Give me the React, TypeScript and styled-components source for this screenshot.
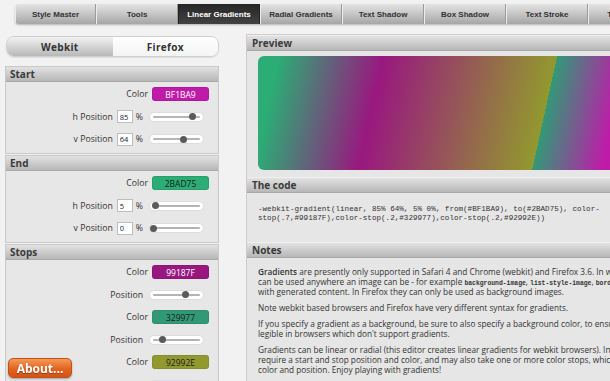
import React from "react";
import styled, { createGlobalStyle } from "styled-components";

const Global = createGlobalStyle`
  html, body { margin: 0; padding: 0; background: #f2f2f2; overflow: hidden; }
  body { font-family: "Open Sans", "Noto Sans", sans-serif; color: #333; }
  * { box-sizing: border-box; }
`;

const Page = styled.div`
  width: 610px;
  height: 381px;
  overflow: hidden;
  padding-top: 4px;
`;

const Nav = styled.nav`
  display: flex;
  margin-left: 15px;
  height: 20px;
  width: 700px;
  border-radius: 4px 0 0 4px;
  overflow: hidden;
  box-shadow: 0 1px 2px rgba(0, 0, 0, 0.25);
`;

const NavTab = styled.div<{ $active?: boolean; $first?: boolean }>`
  flex: 0 0 ${(p) => (p.$first ? "81px" : "82px")};
  display: flex;
  align-items: center;
  justify-content: center;
  font: bold 8px "Liberation Sans Narrow", "Liberation Sans", Arial, sans-serif;
  color: ${(p) => (p.$active ? "#fff" : "#333")};
  background: ${(p) =>
    p.$active ? "linear-gradient(#262626, #424242)" : "linear-gradient(#e4e4e4, #a6a6a6)"};
  border-left: 1px solid ${(p) => (p.$active ? "#222" : "#ececec")};
  border-right: 1px solid ${(p) => (p.$active ? "#222" : "#9a9a9a")};
`;

const Main = styled.div`
  display: flex;
  align-items: flex-start;
  margin-top: 10px;
`;

const LeftCol = styled.div`
  margin-left: 5px;
  width: 214px;
  padding-top: 2px;
  display: flex;
  flex-direction: column;
`;

const EngineTabs = styled.div`
  display: flex;
  margin-left: 1px;
  width: 213px;
  height: 21px;
  border-radius: 8px;
  border: 1px solid #cfcfcf;
  overflow: hidden;
  margin-bottom: 9px;
  box-shadow: 0 1px 1px rgba(0, 0, 0, 0.08);
`;

const EngineTab = styled.div<{ $selected?: boolean }>`
  flex: 1;
  display: flex;
  align-items: center;
  justify-content: center;
  font: bold 10px "Open Sans", "Noto Sans", sans-serif;
  letter-spacing: 0.3px;
  color: #333;
  background: ${(p) =>
    p.$selected ? "linear-gradient(#f2f2f2, #b8b8b8)" : "linear-gradient(#ffffff, #f4f4f4)"};
`;

const Section = styled.section`
  border: 1px solid #c9c9c9;
  background: #e7e7e7;
  margin-bottom: 1px;
`;

const Header = styled.div`
  height: 15px;
  padding-left: 4px;
  font: bold 10px/14px "Open Sans", "Noto Sans", sans-serif;
  color: #3a3a3a;
  background: linear-gradient(#e2e2e2, #b7b7b7);
  border-bottom: 1px solid #a8a8a8;
`;

const SectionBody = styled.div`
  display: flex;
  flex-direction: column;
  gap: 8.5px;
  padding: 5px 9px 7px 0;
`;

const Row = styled.div`
  display: flex;
  align-items: center;
  justify-content: flex-end;
  height: 14px;
`;

const Label = styled.span<{ $gap?: number }>`
  font-size: 8.7px;
  color: #333;
  margin-right: ${(p) => p.$gap ?? 4}px;
`;

const Swatch = styled.div<{ $bg: string; $fg: string }>`
  width: 57px;
  height: 14px;
  border-radius: 3px;
  background: ${(p) => p.$bg};
  color: ${(p) => p.$fg};
  border: 1px solid rgba(0, 0, 0, 0.08);
  font: 8.5px "Open Sans", "Noto Sans", sans-serif;
  display: flex;
  align-items: center;
  justify-content: center;
`;

const NumInput = styled.input`
  width: 16px;
  height: 13px;
  padding: 0 0 0 2px;
  margin: 0;
  border: 1px solid #bdbdbd;
  background: #fff;
  font: 7.5px "Open Sans", "Noto Sans", sans-serif;
  color: #223;
  outline: none;
`;

const Pct = styled.span`
  font-size: 8.7px;
  color: #333;
  margin: 0 6px 0 3px;
`;

const Slider = styled.div`
  position: relative;
  width: 55px;
  height: 10px;
  border-radius: 5px;
  background: #fff;
  border: 1px solid #dcdcdc;
  margin-right: 5px;
  &::before {
    content: "";
    position: absolute;
    left: 3px;
    right: 3px;
    top: 3px;
    height: 2px;
    background: #b4b4b4;
    border-radius: 1px;
  }
`;

const Knob = styled.span<{ $v: number }>`
  position: absolute;
  top: 0.5px;
  left: ${(p) => 3 + p.$v * 47 - 3.5}px;
  width: 7px;
  height: 7px;
  border-radius: 50%;
  background: #5a5a5a;
`;

const RightPanel = styled.div`
  margin-left: 27px;
  width: 439px;
  border: 1px solid #cccccc;
  background: #e6e6e6;
  flex: 0 0 auto;
`;

const RHeader = styled.div`
  height: 16px;
  padding-left: 5px;
  font: bold 10px/14px "Open Sans", "Noto Sans", sans-serif;
  color: #3a3a3a;
  background: linear-gradient(#e2e2e2, #b7b7b7);
  border-top: 1px solid #f0f0f0;
  border-bottom: 1px solid #a8a8a8;
`;

const PreviewBody = styled.div`
  padding: 5px 11px 7px;
`;

const PreviewBox = styled.div`
  width: 415px;
  height: 114px;
  border-radius: 6px;
  background: linear-gradient(
    282.4deg,
    #bf1ba9 69.6px,
    #329977 137.6px,
    #92992e 137.6px,
    #99187f 307.5px,
    #2bad75 409.5px
  );
`;

const CodeBody = styled.div`
  padding: 12px 11px 19px;
  font: 7.6px/9px "Liberation Mono", "DejaVu Sans Mono", monospace;
  color: #333;
  height: 49px;
`;

const NotesBody = styled.div`
  padding: 9px 11px 10px;
  font: 8.25px/10px "Open Sans", "Noto Sans", sans-serif;
  color: #333;
`;

const Para = styled.p`
  margin: 0 0 6px;
  strong { font-weight: 600; }
`;

const Mono = styled.code`
  font: bold 6.4px "Liberation Mono", "DejaVu Sans Mono", monospace;
`;

const AboutButton = styled.button`
  position: fixed;
  left: 8px;
  bottom: 3px;
  width: 64px;
  height: 20px;
  padding: 0;
  border-radius: 5px;
  border: 1px solid #c65016;
  background: linear-gradient(#f59a5a, #e2641f 55%, #d25318);
  color: #fff;
  font: bold 12px "Open Sans", "Noto Sans", sans-serif;
  text-shadow: 0 1px 1px rgba(0, 0, 0, 0.35);
  box-shadow: 0 1px 2px rgba(0, 0, 0, 0.3);
`;

const navItems = [
  "Style Master",
  "Tools",
  "Linear Gradients",
  "Radial Gradients",
  "Text Shadow",
  "Box Shadow",
  "Text Stroke",
  "Transforms",
];

function ColorRow({ bg, fg, text }: { bg: string; fg: string; text: string }) {
  return (
    <Row>
      <Label>Color</Label>
      <Swatch $bg={bg} $fg={fg}>{text}</Swatch>
    </Row>
  );
}

function PosRow({ label, value }: { label: string; value: number }) {
  return (
    <Row>
      <Label>{label}</Label>
      <NumInput readOnly value={String(value)} />
      <Pct>%</Pct>
      <Slider>
        <Knob $v={value / 100} />
      </Slider>
    </Row>
  );
}

function StopPos({ value }: { value: number }) {
  return (
    <Row>
      <Label $gap={6}>Position</Label>
      <Slider>
        <Knob $v={value} />
      </Slider>
    </Row>
  );
}

export default function App() {
  return (
    <Page>
      <Global />
      <Nav>
        {navItems.map((n, i) => (
          <NavTab key={n} $first={i === 0} $active={n === "Linear Gradients"}>
            {n}
          </NavTab>
        ))}
      </Nav>
      <Main>
        <LeftCol>
          <EngineTabs>
            <EngineTab $selected>Webkit</EngineTab>
            <EngineTab>Firefox</EngineTab>
          </EngineTabs>
          <Section>
            <Header>Start</Header>
            <SectionBody>
              <ColorRow bg="#BF1BA9" fg="#fff" text="BF1BA9" />
              <PosRow label="h Position" value={85} />
              <PosRow label="v Position" value={64} />
            </SectionBody>
          </Section>
          <Section>
            <Header>End</Header>
            <SectionBody>
              <ColorRow bg="#2BAD75" fg="#1a1a1a" text="2BAD75" />
              <PosRow label="h Position" value={5} />
              <PosRow label="v Position" value={0} />
            </SectionBody>
          </Section>
          <Section>
            <Header>Stops</Header>
            <SectionBody>
              <ColorRow bg="#99187F" fg="#fff" text="99187F" />
              <StopPos value={0.7} />
              <ColorRow bg="#329977" fg="#1a1a1a" text="329977" />
              <StopPos value={0.2} />
              <ColorRow bg="#92992E" fg="#1a1a1a" text="92992E" />
              <StopPos value={0.2} />
            </SectionBody>
          </Section>
        </LeftCol>
        <RightPanel>
          <RHeader>Preview</RHeader>
          <PreviewBody>
            <PreviewBox />
          </PreviewBody>
          <RHeader>The code</RHeader>
          <CodeBody>
            -webkit-gradient(linear, 85% 64%, 5% 0%, from(#BF1BA9), to(#2BAD75), color-stop(.7,#99187F),color-stop(.2,#329977),color-stop(.2,#92992E))
          </CodeBody>
          <RHeader>Notes</RHeader>
          <NotesBody>
            <Para>
              <strong>Gradients</strong> are presently only supported in Safari 4 and Chrome (webkit) and
              Firefox 3.6. In webkit, gradients can be used anywhere an image can be - for example{" "}
              <Mono>background-image</Mono>, <Mono>list-style-image</Mono>, <Mono>border-image</Mono>, and
              with generated content. In Firefox they can only be used as background images.
            </Para>
            <Para>Note webkit based browsers and Firefox have very different syntax for gradients.</Para>
            <Para>
              If you specify a gradient as a background, be sure to also specify a background color, to
              ensure text is legible in browsers which don't support gradients.
            </Para>
            <Para>
              Gradients can be linear or radial (this editor creates linear gradients for webkit browsers).
              In webkit, they require a start and stop position and color, and may also take one or more
              color stops, which each have a
              <br />
              color and position. Enjoy playing with gradients!
            </Para>
          </NotesBody>
        </RightPanel>
      </Main>
      <AboutButton>About...</AboutButton>
    </Page>
  );
}
